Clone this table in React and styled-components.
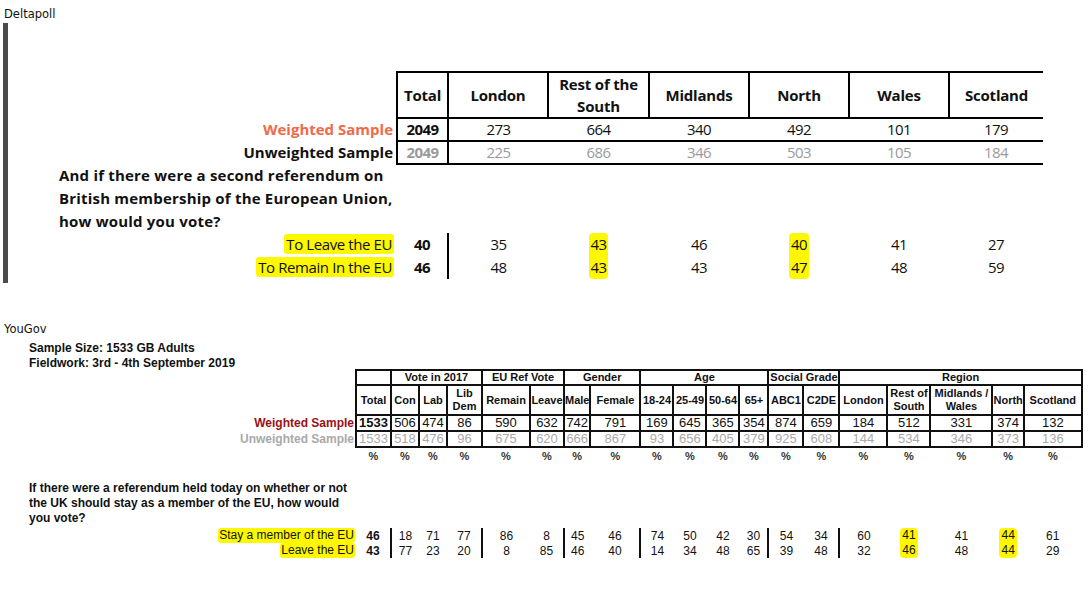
import React from 'react';
import styled, { createGlobalStyle } from 'styled-components';

const GlobalStyle = createGlobalStyle`
  body {
    margin: 0;
    background: #fff;
  }
`;

const Page = styled.div`
  padding: 7px 0 20px 3px;
  display: flex;
  flex-direction: column;
`;

const SourceLabel = styled.div`
  font-family: "DejaVu Sans", Verdana, sans-serif;
  font-size: 11.5px;
  line-height: 15px;
  color: #111;
  padding-left: 1px;
  margin-top: ${(p) => p.$gap || 0}px;
`;

const QuoteBar = styled.div`
  margin-top: 1px;
  border-left: 5px solid #4b4b4b;
  padding: 48px 0 4px 51px;
`;

/* ---------- Deltapoll table ---------- */

const DpTable = styled.table`
  border-collapse: collapse;
  table-layout: fixed;
  font-family: "Open Sans", "Liberation Sans", sans-serif;
  font-size: 15px;
  color: #111;
`;

const DpHead = styled.th`
  border-top: 2px solid #000;
  border-bottom: 2px solid #000;
  border-left: 2px solid #000;
  height: 44px;
  padding: 0;
  font-weight: 700;
  line-height: 22px;
  text-align: center;
  vertical-align: middle;
  letter-spacing: -0.2px;
`;

const DpLabel = styled.td`
  padding: 0 3px 0 0;
  height: 21px;
  line-height: 21px;
  text-align: right;
  white-space: nowrap;
  font-weight: ${(p) => (p.$plain ? 400 : 700)};
  color: ${(p) => p.$color || '#111'};
  letter-spacing: ${(p) => (p.$plain ? '-0.4px' : '0')};
`;

const DpNum = styled.td`
  padding: 0;
  height: ${(p) => (p.$ruled ? 21 : 23)}px;
  line-height: 21px;
  text-align: center;
  letter-spacing: -0.6px;
  color: ${(p) => (p.$muted ? '#9a9a9a' : '#111')};
  font-weight: ${(p) => (p.$bold ? 700 : 400)};
  border-bottom: ${(p) => (p.$ruled ? '2px solid #000' : 'none')};
  border-left: ${(p) => (p.$boxed ? '2px solid #000' : 'none')};
  border-right: ${(p) => (p.$boxed || p.$divide ? '2px solid #000' : 'none')};
`;

const DpQuestion = styled.td`
  padding: 0;
  font-weight: 700;
  line-height: 23px;
  letter-spacing: 0.2px;
  white-space: nowrap;
`;

const Marker = styled.span`
  display: inline-block;
  background: #fdf800;
  padding: 0 ${(p) => p.$pad ?? 2}px;
  height: ${(p) => p.$h}px;
  line-height: ${(p) => p.$h}px;
  border-radius: ${(p) => (p.$edge === 'top' ? '4px 4px 0 0' : p.$edge === 'bottom' ? '0 0 4px 4px' : '3px')};
`;

/* ---------- YouGov table ---------- */

const YgBlock = styled.div`
  padding-left: 26px;
  font-family: "Liberation Sans", Arial, sans-serif;
  color: #111;
`;

const MetaLine = styled.div`
  font-size: 12px;
  font-weight: 700;
  line-height: 15px;
  margin-top: ${(p) => p.$gap || 0}px;
`;

const YgTable = styled.table`
  border-collapse: collapse;
  table-layout: fixed;
  margin-top: -2px;
  font-family: "Liberation Sans", Arial, sans-serif;
`;

const YgHead = styled.th`
  border: ${(p) => (p.$blank ? 'none' : '2px solid #111')};
  padding: 0;
  height: ${(p) => p.$h}px;
  font-size: 11px;
  font-weight: 700;
  line-height: 13px;
  text-align: center;
  vertical-align: middle;
  white-space: nowrap;
`;

const YgLabel = styled.td`
  padding: 0 1px 0 0;
  height: 14px;
  line-height: 14px;
  text-align: right;
  white-space: nowrap;
  font-size: 12px;
  font-weight: ${(p) => (p.$plain ? 400 : 700)};
  color: ${(p) => p.$color || '#111'};
`;

const YgCell = styled.td`
  padding: 0;
  height: ${(p) => p.$h || 14}px;
  line-height: 14px;
  text-align: center;
  white-space: nowrap;
  font-size: ${(p) => p.$size || 13}px;
  font-weight: ${(p) => (p.$bold ? 700 : 400)};
  color: ${(p) => p.$color || '#111'};
  border: ${(p) => (p.$grid ? '2px solid #111' : 'none')};
  border-right: ${(p) => (p.$grid || p.$divide ? '2px solid #111' : 'none')};
`;

const YgQuestion = styled.td`
  padding: 17px 0 2px 0;
  font-size: 12px;
  font-weight: 700;
  line-height: 15px;
  white-space: nowrap;
`;

/* ---------- data ---------- */

const dpCols = [
  { head: 'Total', w: 51 },
  { head: 'London', w: 100 },
  { head: ['Rest of the', 'South'], w: 101 },
  { head: 'Midlands', w: 100 },
  { head: 'North', w: 100 },
  { head: 'Wales', w: 100 },
  { head: 'Scotland', w: 94 },
];
const dpWeighted = [2049, 273, 664, 340, 492, 101, 179];
const dpUnweighted = [2049, 225, 686, 346, 503, 105, 184];
const dpVotes = [
  { label: 'To Leave the EU', values: [40, 35, 43, 46, 40, 41, 27], edge: 'top' },
  { label: 'To Remain In the EU', values: [46, 48, 43, 43, 47, 48, 59], edge: 'bottom' },
];
const dpMarked = [2, 4];

const ygGroups = [
  { label: '', span: 1 },
  { label: 'Vote in 2017', span: 3 },
  { label: 'EU Ref Vote', span: 2 },
  { label: 'Gender', span: 2 },
  { label: 'Age', span: 4 },
  { label: 'Social Grade', span: 2 },
  { label: 'Region', span: 5 },
];
const ygCols = [
  { head: 'Total', w: 35 },
  { head: 'Con', w: 28 },
  { head: 'Lab', w: 28 },
  { head: ['Lib', 'Dem'], w: 35, divide: true },
  { head: 'Remain', w: 48 },
  { head: 'Leave', w: 34, divide: true },
  { head: 'Male', w: 26 },
  { head: 'Female', w: 50, divide: true },
  { head: '18-24', w: 33 },
  { head: '25-49', w: 33 },
  { head: '50-64', w: 33 },
  { head: '65+', w: 29, divide: true },
  { head: 'ABC1', w: 35 },
  { head: 'C2DE', w: 36, divide: true },
  { head: 'London', w: 48 },
  { head: ['Rest of', 'South'], w: 43 },
  { head: ['Midlands /', 'Wales'], w: 62 },
  { head: 'North', w: 28 },
  { head: 'Scotland', w: 58 },
];
const ygWeighted = [1533, 506, 474, 86, 590, 632, 742, 791, 169, 645, 365, 354, 874, 659, 184, 512, 331, 374, 132];
const ygUnweighted = [1533, 518, 476, 96, 675, 620, 666, 867, 93, 656, 405, 379, 925, 608, 144, 534, 346, 373, 136];
const ygVotes = [
  { label: 'Stay a member of the EU', values: [46, 18, 71, 77, 86, 8, 45, 46, 74, 50, 42, 30, 54, 34, 60, 41, 41, 44, 61], edge: 'top' },
  { label: 'Leave the EU', values: [43, 77, 23, 20, 8, 85, 46, 40, 14, 34, 48, 65, 39, 48, 32, 46, 48, 44, 29], edge: 'bottom' },
];
const ygMarked = [15, 17];

const Lines = ({ text }) =>
  Array.isArray(text) ? text.map((t, i) => [i > 0 && <br key={'b' + i} />, t]) : text;

const Deltapoll = () => (
  <QuoteBar>
    <DpTable>
      <colgroup>
        <col style={{ width: 338 }} />
        {dpCols.map((c, i) => <col key={i} style={{ width: c.w }} />)}
      </colgroup>
      <tbody>
        <tr>
          <td />
          {dpCols.map((c, i) => (
            <DpHead key={i}>
              <Lines text={c.head} />
            </DpHead>
          ))}
        </tr>
        <tr>
          <DpLabel $color="#ee6a4a">Weighted Sample</DpLabel>
          {dpWeighted.map((v, i) => (
            <DpNum key={i} $ruled $bold={i === 0} $boxed={i === 0}>{v}</DpNum>
          ))}
        </tr>
        <tr>
          <DpLabel>Unweighted Sample</DpLabel>
          {dpUnweighted.map((v, i) => (
            <DpNum key={i} $ruled $muted $bold={i === 0} $boxed={i === 0}>{v}</DpNum>
          ))}
        </tr>
        <tr>
          <DpQuestion>
            And if there were a second referendum on<br />
            British membership of the European Union,<br />
            how would you vote?
          </DpQuestion>
        </tr>
        {dpVotes.map((row) => (
          <tr key={row.label}>
            <DpLabel $plain>
              <Marker $h={20}>{row.label}</Marker>
            </DpLabel>
            {row.values.map((v, i) => (
              <DpNum key={i} $bold={i === 0} $divide={i === 0}>
                {dpMarked.includes(i) ? <Marker $h={23} $edge={row.edge}>{v}</Marker> : v}
              </DpNum>
            ))}
          </tr>
        ))}
      </tbody>
    </DpTable>
  </QuoteBar>
);

const YouGov = () => (
  <YgBlock>
    <MetaLine $gap={4}>Sample Size: 1533 GB Adults</MetaLine>
    <MetaLine>Fieldwork: 3rd - 4th September 2019</MetaLine>
    <YgTable>
      <colgroup>
        <col style={{ width: 327 }} />
        {ygCols.map((c, i) => <col key={i} style={{ width: c.w }} />)}
      </colgroup>
      <tbody>
        <tr>
          <YgHead $blank $h={12} />
          {ygGroups.map((g, i) => (
            <YgHead key={i} colSpan={g.span} $h={12}>{g.label}</YgHead>
          ))}
        </tr>
        <tr>
          <YgHead $blank $h={28} />
          {ygCols.map((c, i) => (
            <YgHead key={i} $h={28}>
              <Lines text={c.head} />
            </YgHead>
          ))}
        </tr>
        <tr>
          <YgLabel $color="#9b1016">Weighted Sample</YgLabel>
          {ygWeighted.map((v, i) => (
            <YgCell key={i} $grid $bold={i === 0}>{v}</YgCell>
          ))}
        </tr>
        <tr>
          <YgLabel $color="#a9a9a9">Unweighted Sample</YgLabel>
          {ygUnweighted.map((v, i) => (
            <YgCell key={i} $grid $color="#aaaaaa">{v}</YgCell>
          ))}
        </tr>
        <tr>
          <td />
          {ygCols.map((c, i) => (
            <YgCell key={i} $size={11} $bold $color="#333" $h={16}>%</YgCell>
          ))}
        </tr>
        <tr>
          <YgQuestion>
            If there were a referendum held today on whether or not<br />
            the UK should stay as a member of the EU, how would<br />
            you vote?
          </YgQuestion>
        </tr>
        {ygVotes.map((row) => (
          <tr key={row.label}>
            <YgLabel $plain>
              <Marker $h={15} $pad={1}>{row.label}</Marker>
            </YgLabel>
            {row.values.map((v, i) => (
              <YgCell key={i} $size={12} $h={15} $bold={i === 0} $divide={i === 0 || ygCols[i].divide}>
                {ygMarked.includes(i) ? <Marker $h={15} $pad={2} $edge={row.edge}>{v}</Marker> : v}
              </YgCell>
            ))}
          </tr>
        ))}
      </tbody>
    </YgTable>
  </YgBlock>
);

export default function App() {
  return (
    <>
      <GlobalStyle />
      <Page>
        <SourceLabel>Deltapoll</SourceLabel>
        <Deltapoll />
        <SourceLabel $gap={39}>YouGov</SourceLabel>
        <YouGov />
      </Page>
    </>
  );
}
